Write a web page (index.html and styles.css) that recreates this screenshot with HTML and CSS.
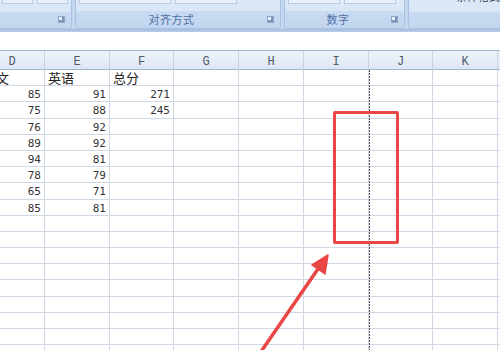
FILE: index.html
```html
<!DOCTYPE html>
<html lang="zh-CN">
<head>
    <meta charset="UTF-8">
    <title>成绩表</title>
    <link rel="stylesheet" href="styles.css">
</head>
<body>
    <div class="ribbon">
        <div class="group g1">
            <div class="controls"><span class="ctl c1"></span><span class="ctl c2"></span></div>
            <div class="label"><span></span><i class="launcher"></i></div>
        </div>
        <div class="group g2">
            <div class="controls"><span class="ctl c3"></span><span class="ctl c4"></span></div>
            <div class="label"><span>对齐方式</span><i class="launcher"></i></div>
        </div>
        <div class="group g3">
            <div class="controls"><span class="ctl c5"></span><span class="ctl c6"></span></div>
            <div class="label"><span>数字</span><i class="launcher"></i></div>
        </div>
        <div class="group g4">
            <div class="controls"><span class="cut">条件格式</span></div>
            <div class="label"><span></span></div>
        </div>
    </div>
    <div class="ribbon-base"></div>
    <div class="formula-gap"></div>

    <div class="sheet" id="sheet"></div>

    <div class="page-break"></div>
    <div class="mark"></div>
    <svg class="arrow" width="500" height="350" viewBox="0 0 500 350">
        <line x1="258" y1="356" x2="320" y2="266" stroke="#e94646" stroke-width="3.5" stroke-linecap="round"/>
        <polygon points="328,255 312,265 325,274" fill="#e94646" stroke="#e94646" stroke-width="1.5" stroke-linejoin="round"/>
    </svg>

    <script>
        const cols = ['D', 'E', 'F', 'G', 'H', 'I', 'J', 'K', 'L'];
        const rows = [
            ['语文', '英语', '总分'],
            [85, 91, 271],
            [75, 88, 245],
            [76, 92],
            [89, 92],
            [94, 81],
            [78, 79],
            [65, 71],
            [85, 81]
        ];
        const sheet = document.getElementById('sheet');

        cols.forEach(c => {
            const head = document.createElement('div');
            head.className = 'head';
            head.textContent = c;
            sheet.appendChild(head);
        });

        for (let r = 0; r < 18; r++) {
            const data = rows[r] || [];
            cols.forEach((c, i) => {
                const cell = document.createElement('div');
                cell.className = 'cell';
                const v = data[i];
                if (v !== undefined) {
                    cell.textContent = v;
                    cell.classList.add(typeof v === 'number' ? 'num' : 'text');
                }
                sheet.appendChild(cell);
            });
        }
    </script>
</body>
</html>
```

FILE: styles.css
```css
body {
    margin: 0;
    width: 500px;
    height: 350px;
    overflow: hidden;
    background: #fff;
    position: relative;
    font-family: "Noto Sans CJK SC", sans-serif;
}

/* ribbon */
.ribbon {
    height: 29px;
    display: flex;
    gap: 3px;
    background: #c4d7ef;
    overflow: hidden;
}
.group {
    display: flex;
    flex-direction: column;
    background: linear-gradient(#dde9f7, #d3e2f4);
    border: 1px solid #aac3e2;
    border-top: none;
    border-radius: 0 0 3px 3px;
    box-sizing: border-box;
    overflow: hidden;
}
.g1 { width: 74px; margin-left: -2px; }
.g2 { width: 206px; }
.g3 { width: 121px; }
.g4 { flex: 1; margin-right: -4px; }
.controls {
    height: 12px;
    position: relative;
    display: flex;
    gap: 4px;
    padding: 0 3px;
}
.ctl {
    height: 3px;
    background: #e9f0fa;
    border: 1px solid #b9cce6;
    border-top: none;
}
.c1 { width: 30px; }
.c2 { width: 30px; }
.c3 { width: 90px; }
.c4 { width: 60px; }
.c5 { width: 50px; }
.c6 { width: 50px; }
.cut {
    margin-top: -11px;
    margin-left: 44px;
    font-size: 11px;
    line-height: 14px;
    color: #3c4e66;
}
.label {
    flex: 1;
    display: flex;
    align-items: center;
    background: linear-gradient(#c9dbf1, #c2d5ee);
    padding: 0 6px 1px 0;
}
.label span {
    flex: 1;
    text-align: center;
    font-size: 11px;
    color: #4d70a8;
    letter-spacing: 0.5px;
}
.launcher {
    width: 5px;
    height: 5px;
    border: 1px solid #8ea7c8;
    background: #eef3fa;
    box-shadow: inset -2px -2px 0 #7b93b5;
}
.ribbon-base {
    height: 3px;
    background: linear-gradient(#a3bddf, #b9cde8);
}
.formula-gap {
    height: 18px;
    background: #fff;
}

/* sheet */
.sheet {
    display: grid;
    grid-template-columns: 65px 65px 64px 65px 65px 65px 64px 65px 65px;
    grid-template-rows: 19px;
    grid-auto-rows: 16.2px;
    margin-left: -20px;
    border-top: 1px solid #9eb6ce;
}
.head {
    background: linear-gradient(#eef3fa, #dde7f4);
    border-right: 1px solid #c5d3e5;
    border-bottom: 1px solid #9eb6ce;
    box-sizing: border-box;
    text-align: center;
    font-family: "Liberation Mono", monospace;
    font-size: 12px;
    line-height: 22px;
    color: #4c5a6c;
}
.cell {
    border-right: 1px solid #d0d7e5;
    border-bottom: 1px solid #d0d7e5;
    box-sizing: border-box;
    padding: 0 3px;
    overflow: hidden;
    white-space: nowrap;
}
.cell.text {
    font-size: 13px;
    line-height: 16px;
    color: #222;
}
.cell.num {
    text-align: right;
    font-family: "DejaVu Sans Mono", monospace;
    font-size: 11px;
    line-height: 17px;
    color: #333;
}

/* annotations over the sheet */
.page-break {
    position: absolute;
    left: 369px;
    top: 70px;
    bottom: 0;
    width: 1px;
    background: repeating-linear-gradient(#555 0 2px, transparent 2px 3px);
}
.mark {
    position: absolute;
    left: 333px;
    top: 111px;
    width: 66px;
    height: 133px;
    border: 3px solid #e94646;
    border-radius: 2px;
    box-sizing: border-box;
}
.arrow {
    position: absolute;
    left: 0;
    top: 0;
}
```
